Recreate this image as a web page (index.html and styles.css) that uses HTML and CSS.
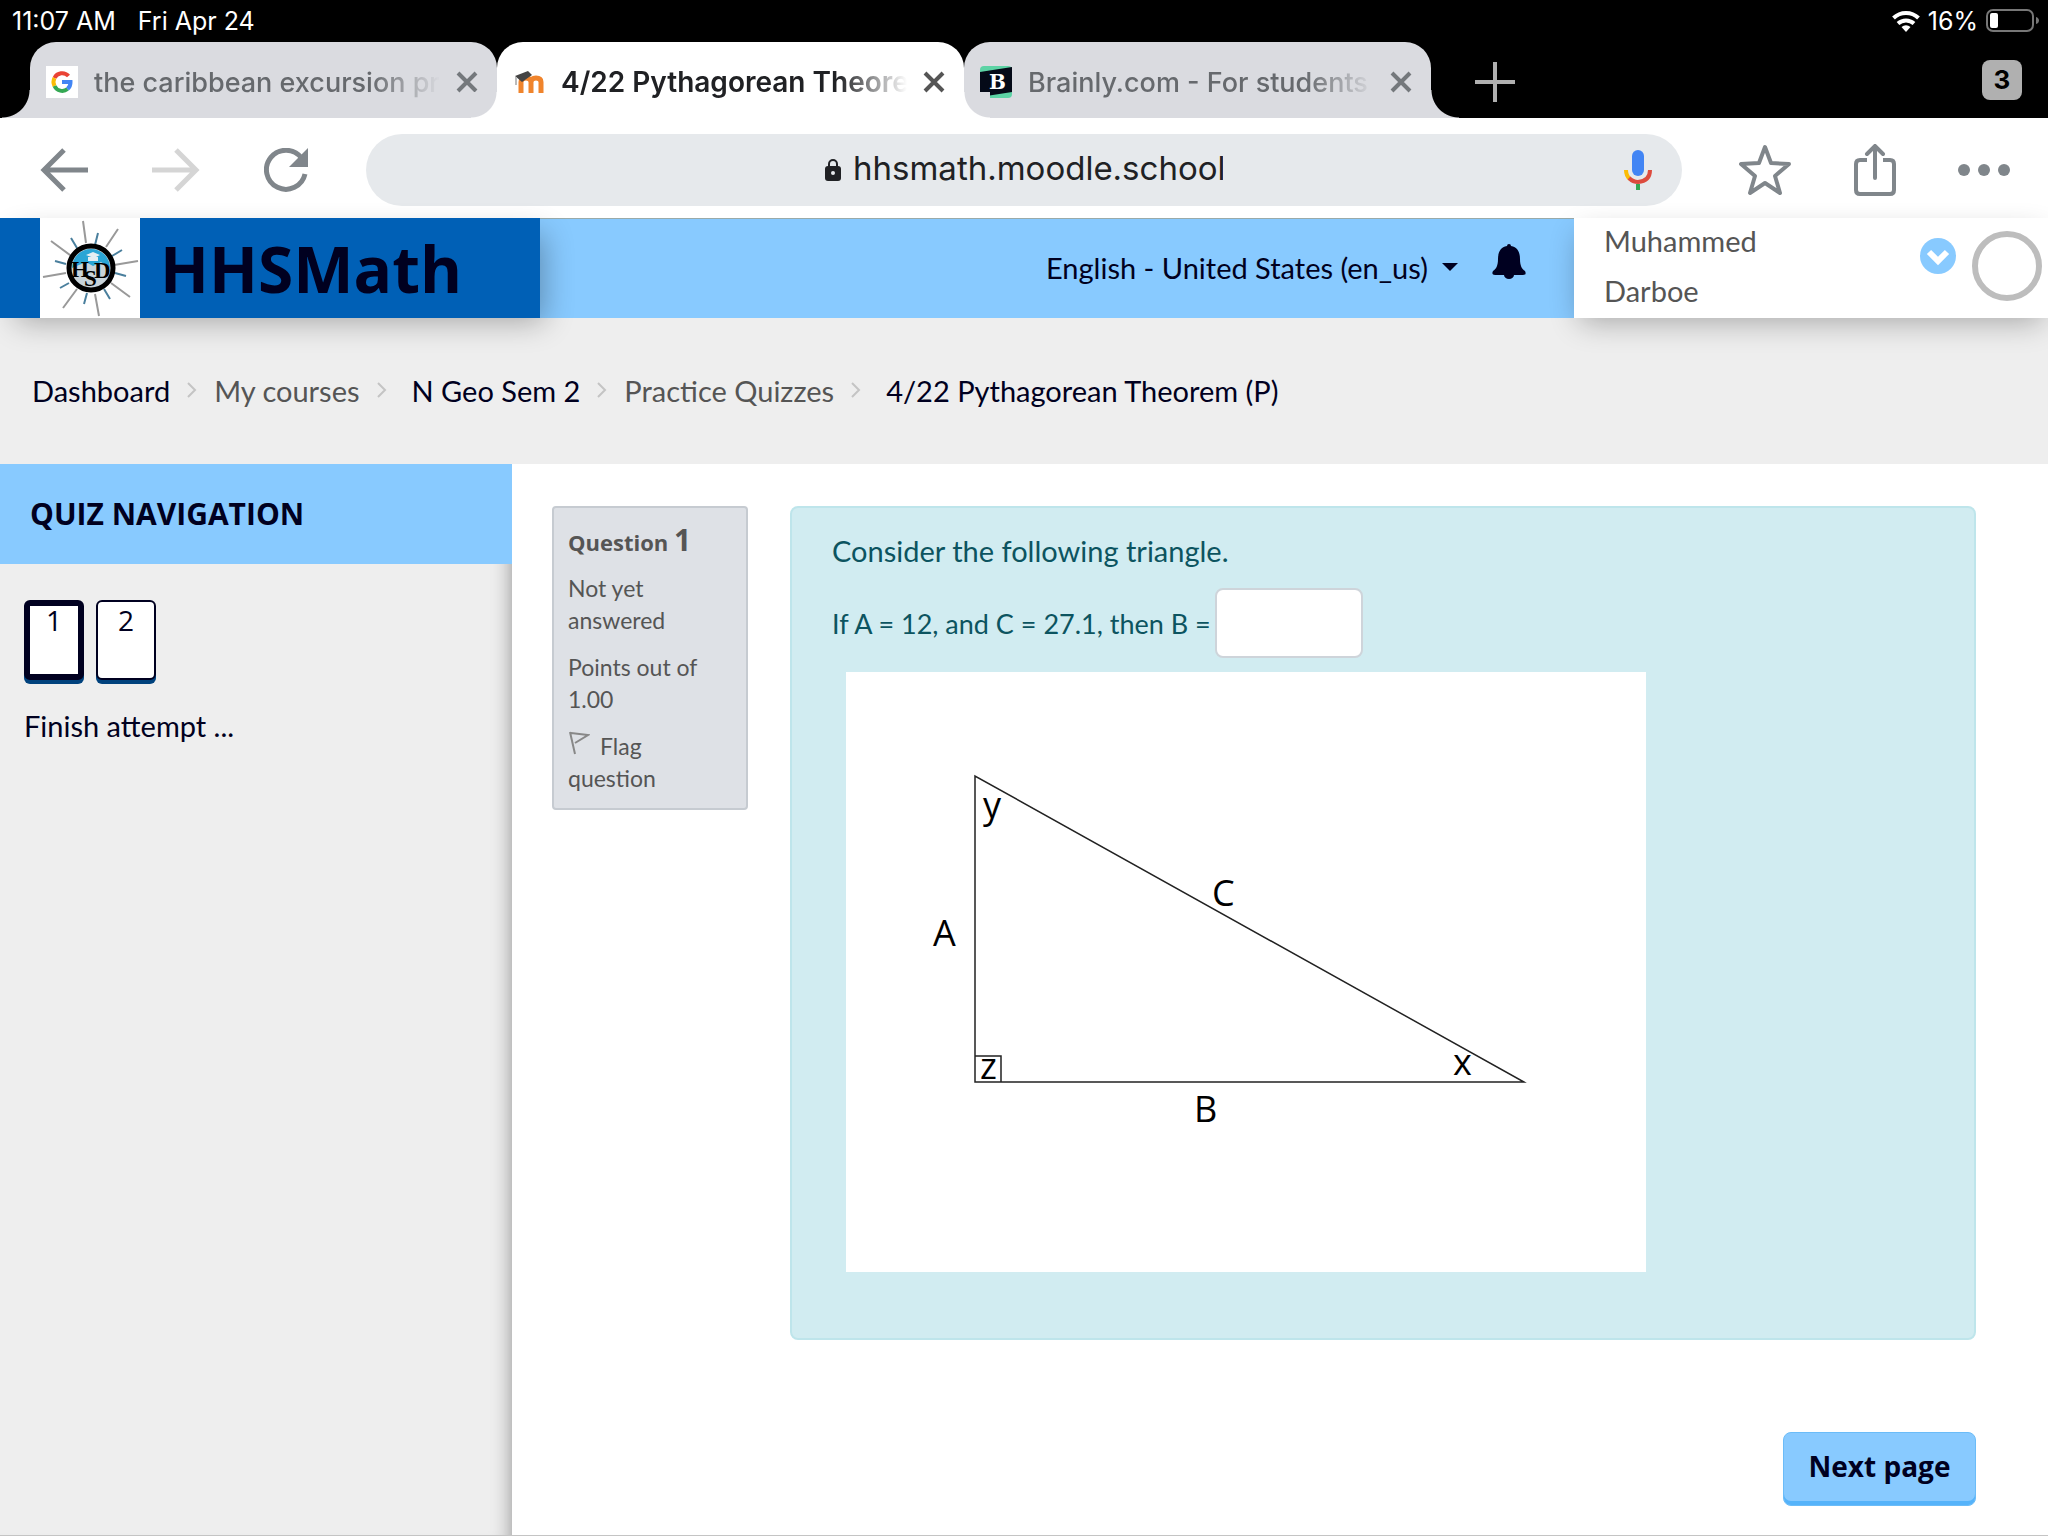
FILE: index.html
```
<!DOCTYPE html>
<html lang="en">
<head>
    <meta charset="UTF-8">
    <meta name="viewport" content="width=device-width, initial-scale=1">
    <title>4/22 Pythagorean Theorem (P)</title>
    <link rel="stylesheet" href="styles.css">
</head>
<body>
    <div class="browser-top">
        <div class="status-bar">
            <span>11:07 AM</span>
            <span>Fri Apr 24</span>
            <div class="status-right">
                <svg width="28" height="22" viewBox="0 0 28 22" fill="none" stroke="#fff" stroke-width="4">
                    <path d="M1.500 8a18 18 0 0 1 25 0"/>
                    <path d="M6 13.500a12 12 0 0 1 16 0"/>
                    <path d="M14 22l-4.500-5a7 7 0 0 1 9 0z" fill="#fff" stroke="none"/>
                </svg>
                <span>16%</span>
                <svg width="54" height="24" viewBox="0 0 54 24">
                    <rect x="1" y="1" width="46" height="21" rx="6" fill="none" stroke="#777" stroke-width="2"/>
                    <rect x="4" y="4" width="8" height="15" rx="2" fill="#fff"/>
                    <path d="M50 8c4 1 4 6 0 7z" fill="#777"/>
                </svg>
            </div>
        </div>
        <div class="tabs">
            <div class="tab first">
                <svg width="32" height="32" viewBox="0 0 32 32">
                    <path fill="#fff" d="M0 0h32v32H0z"/>
                    <g fill="none" stroke-width="4">
                        <path d="M22.500 10A8.500 8.500 0 0 0 8.500 12" stroke="#ea4335"/>
                        <path d="M8.500 12a8.500 8.500 0 0 0 0 8" stroke="#fbbc05"/>
                        <path d="M8.500 20a8.500 8.500 0 0 0 13 3" stroke="#34a853"/>
                        <path d="M16 16h8.500a9 9 0 0 1-3 7" stroke="#4285f4"/>
                    </g>
                </svg>
                <a href="#" class="tab-title">the caribbean excursion pr</a>
                <button class="close" aria-label="Close tab"><svg width="22" height="22" viewBox="0 0 22 22"><path d="M2 2l18 18M20 2L2 20" stroke="currentColor" stroke-width="4"/></svg></button>
            </div>
            <div class="tab active">
                <svg width="32" height="32" viewBox="0 0 32 32">
                    <path d="M8 27V16q0-4 5-4t5 4v11M18 27V16q0-4 5-4t5 4v11" fill="none" stroke="#f0842c" stroke-width="5"/>
                    <path d="M2 10l13-5 4 4-10 7z" fill="#444"/>
                    <path d="M3 11v8" stroke="#bbb" stroke-width="2"/>
                </svg>
                <a href="#" class="tab-title">4/22 Pythagorean Theorem</a>
                <button class="close" aria-label="Close tab"><svg width="22" height="22" viewBox="0 0 22 22"><path d="M2 2l18 18M20 2L2 20" stroke="currentColor" stroke-width="4"/></svg></button>
            </div>
            <div class="tab last">
                <svg width="32" height="32" viewBox="0 0 32 32">
                    <rect width="32" height="32" rx="4" fill="#5dd3a5"/>
                    <path d="M0 6L32 1v25L0 31z" fill="#050a18"/>
                    <text x="9" y="23" class="favicon-letter">B</text>
                </svg>
                <a href="#" class="tab-title">Brainly.com - For students</a>
                <button class="close" aria-label="Close tab"><svg width="22" height="22" viewBox="0 0 22 22"><path d="M2 2l18 18M20 2L2 20" stroke="currentColor" stroke-width="4"/></svg></button>
            </div>
            <button class="new-tab" aria-label="New tab"><svg width="40" height="40" viewBox="0 0 40 40"><path d="M20 0v40M0 20h40" stroke="#b0b0b0" stroke-width="4"/></svg></button>
            <button class="tab-count">3</button>
        </div>
    </div>

    <div class="toolbar">
        <div class="nav-buttons">
            <button aria-label="Back"><svg width="48" height="44" viewBox="0 0 48 44"><path d="M48 22H4M24 2L4 22l20 20" fill="none" stroke="#80868b" stroke-width="5"/></svg></button>
            <button aria-label="Forward"><svg width="48" height="44" viewBox="0 0 48 44"><path d="M0 22h44M24 2l20 20-20 20" fill="none" stroke="#d5d5d5" stroke-width="5"/></svg></button>
            <button aria-label="Reload"><svg width="44" height="44" viewBox="0 0 44 44"><path d="M37.500 10A19.500 19.500 0 1 0 41 26" fill="none" stroke="#80868b" stroke-width="5"/><path d="M44 0v19H25z" fill="#80868b"/></svg></button>
        </div>
        <div class="address">
            <svg width="16" height="22" viewBox="0 0 16 22"><path d="M4 9V5a4 4 0 0 1 8 0v4" fill="none" stroke="#202124" stroke-width="2"/><rect y="7" width="16" height="15" rx="3" fill="#202124"/><circle cx="8" cy="14" r="2" fill="#e8eaed"/></svg>
            <input type="text" value="hhsmath.moodle.school" aria-label="Address">
            <button class="mic" aria-label="Voice search"><svg width="28" height="40" viewBox="0 0 28 40" fill="none" stroke-width="4"><rect x="8" width="12" height="26" rx="6" fill="#4285f4"/><path d="M2 20q0 6 4 9" stroke="#fbbc05"/><path d="M5 28q4 4 9 4 12-1 12-12" stroke="#dd4b3e"/><path d="M14 34v6" stroke="#34a853"/></svg></button>
        </div>
        <div class="tools">
            <button aria-label="Bookmark"><svg width="54" height="52" viewBox="0 0 54 52"><path d="M27 3l6 16 18 1-14 12 5 17-15-10-15 10 5-17L3 20l18-1z" fill="none" stroke="#80868b" stroke-width="4" stroke-linejoin="round"/></svg></button>
            <button aria-label="Share"><svg width="42" height="52" viewBox="0 0 42 52" fill="none" stroke="#80868b"><path d="M13 16H6q-4 0-4 4v26q0 4 4 4h30q4 0 4-4V20q0-4-4-4h-7" stroke-width="4"/><path d="M21 34V2M13 10l8-8 8 8" stroke-width="4" stroke-linecap="round"/></svg></button>
            <button aria-label="More"><svg width="52" height="12" viewBox="0 0 52 12" fill="#80868b"><circle cx="6" cy="6" r="6"/><circle cx="26" cy="6" r="6"/><circle cx="46" cy="6" r="6"/></svg></button>
        </div>
    </div>

    <header class="site-header">
        <a href="#" class="brand">
            <svg class="logo" width="100" height="100" viewBox="0 0 100 100">
                <path fill="#fff" d="M0 0h100v100H0z"/>
                <path d="M43 3l3 22M78 11L66 29M11 23l23 17M98 43l-24 4M3 59l23-4M90 79L71 65M23 90l14-19M59 98l-4-22" stroke="#999" stroke-width="2"/>
                <path d="M58 15l-3 12M31 20l6 10M82 32l-10 6M15 43l11 3M20 70l9-5M44 86l3-11M70 81l-6-10M86 58l-11-3" stroke="#4a7f9d" stroke-width="2"/>
                <circle cx="51" cy="50" r="22" fill="#c9d4da" stroke="#000" stroke-width="5"/>
                <path d="M32 50a19 19 0 0 1 38 0l-9-6-8 4-7-4z" fill="#2aa5d5"/>
                <path d="M46 37l7-3 7 3-6 3zM48 39h10v4H48z" fill="#e5eef2"/>
                <text x="31" y="59" class="logo-letter">H</text>
                <text x="44" y="68" class="logo-letter">S</text>
                <text x="54" y="60" class="logo-letter">D</text>
            </svg>
            <span>HHSMath</span>
        </a>
        <div class="header-tools">
            <div class="language">
                <select aria-label="Language">
                    <option>English - United States ‎(en_us)‎</option>
                </select>
                <svg width="16" height="8" viewBox="0 0 16 8"><path d="M0 0h16L8 8z" fill="#000020"/></svg>
            </div>
            <button class="bell" aria-label="Notifications"><svg width="34" height="36" viewBox="0 0 34 36" fill="#000020"><path d="M15 3a2 2 0 0 1 4 0c7 1 9 7 9 13 0 7 2 10 5 12q2 4-2 4H3q-4 0-2-4c3-2 5-5 5-12 0-6 2-12 9-13z"/><path d="M12 32h10a5 4 0 0 1-10 0z"/></svg></button>
        </div>
        <div class="user">
            <span class="user-name">Muhammed Darboe</span>
            <button aria-label="User menu"><svg width="36" height="36" viewBox="0 0 36 36"><circle cx="18" cy="18" r="18" fill="#88caff"/><path d="M9 14l9 9 9-9" fill="none" stroke="#fff" stroke-width="6"/></svg></button>
            <span class="avatar"></span>
        </div>
    </header>

    <nav class="breadcrumb">
        <a href="#">Dashboard</a>
        <svg class="sep" width="10" height="16" viewBox="0 0 10 16"><path d="M1 1l7 7-7 7"/></svg>
        <span>My courses</span>
        <svg class="sep" width="10" height="16" viewBox="0 0 10 16"><path d="M1 1l7 7-7 7"/></svg>
        <a href="#" class="course">N Geo Sem 2</a>
        <svg class="sep" width="10" height="16" viewBox="0 0 10 16"><path d="M1 1l7 7-7 7"/></svg>
        <span>Practice Quizzes</span>
        <svg class="sep" width="10" height="16" viewBox="0 0 10 16"><path d="M1 1l7 7-7 7"/></svg>
        <a href="#" class="course">4/22 Pythagorean Theorem (P)</a>
    </nav>

    <div class="page">
        <aside class="sidebar">
            <h2>QUIZ NAVIGATION</h2>
            <div class="quiz-nav">
                <div class="quiz-buttons">
                    <a href="#" class="current">1</a>
                    <a href="#">2</a>
                </div>
                <a href="#" class="finish">Finish attempt ...</a>
            </div>
        </aside>
        <main>
            <div class="question">
                <div class="info">
                    <h3>Question <span>1</span></h3>
                    <p>Not yet answered</p>
                    <p>Points out of 1.00</p>
                    <p><svg class="flag" width="22" height="24" viewBox="0 0 22 24"><path d="M2 1l5 22M3 2l17 2-13 8" fill="none" stroke="#888" stroke-width="2"/></svg>Flag question</p>
                </div>
                <div class="content">
                    <p>Consider the following triangle.</p>
                    <div class="answer">
                        <label for="answer">If A = 12, and C = 27.1, then B =</label>
                        <input type="text" id="answer">
                    </div>
                    <svg class="triangle" width="800" height="600" viewBox="0 0 800 600">
                        <path d="M129 104v306h549zM129 384h26v26" fill="none" stroke="#222" stroke-width="1.500"/>
                        <text x="87" y="274">A</text>
                        <text x="348" y="450">B</text>
                        <text x="366" y="234">C</text>
                        <text x="137" y="146">y</text>
                        <text x="134" y="407">z</text>
                        <text x="607" y="403">x</text>
                    </svg>
                </div>
            </div>
            <button class="next">Next page</button>
        </main>
    </div>
</body>
</html>
```
FILE: styles.css
```
* {
    box-sizing: border-box;
}
body {
    margin: 0;
    min-height: 100vh;
    display: flex;
    flex-direction: column;
    background: #fff;
    border-bottom: 1px solid #c4c4c4;
    font-family: Lato, sans-serif;
    font-size: 29px;
    color: #555;
}
a {
    color: #000020;
    text-decoration: none;
}
button {
    padding: 0;
    border: 0;
    background: none;
    display: flex;
    align-items: center;
    justify-content: center;
}
svg {
    flex-shrink: 0;
}

/* browser */
.browser-top {
    background: #000;
    font-family: Inter, sans-serif;
}
.status-bar {
    display: flex;
    align-items: center;
    gap: 22px;
    height: 42px;
    padding: 0 8px 0 12px;
    font-size: 25px;
    color: #fff;
}
.status-right {
    margin-left: auto;
    display: flex;
    align-items: center;
    gap: 8px;
}
.tabs {
    display: flex;
    align-items: center;
    height: 76px;
    padding: 0 26px 0 30px;
}
.tab {
    position: relative;
    width: 467px;
    height: 76px;
    display: flex;
    align-items: center;
    gap: 16px;
    padding: 4px 19px 0 16px;
    border-radius: 26px;
    background: #dadbe0;
}
.tab.active {
    border-radius: 26px 26px 0 0;
    background: #fff;
}
.first {
    border-bottom-left-radius: 0;
}
.last {
    border-bottom-right-radius: 0;
}
.first::before,
.last::after {
    content: "";
    position: absolute;
    bottom: 0;
    width: 28px;
    height: 28px;
}
.first::before {
    right: 100%;
    background: radial-gradient(circle at 0 0, #000 27px, #dadbe0 28px);
}
.last::after {
    left: 100%;
    background: radial-gradient(circle at 100% 0, #000 27px, #dadbe0 28px);
}
/* white behind the rounded corners beside the active tab */
.active::before,
.active::after {
    content: "";
    position: absolute;
    bottom: 0;
    width: 26px;
    height: 26px;
}
.active::before {
    right: 100%;
    background: radial-gradient(circle at 0 0, #dadbe0 25px, #fff 26px);
}
.active::after {
    left: 100%;
    z-index: 1;
    background: radial-gradient(circle at 100% 0, #dadbe0 25px, #fff 26px);
}
.tab-title {
    flex: 1;
    overflow: hidden;
    white-space: nowrap;
    font-size: 27px;
    font-weight: 500;
    color: #66696d;
    -webkit-mask-image: linear-gradient(to right, #000 80%, transparent);
    mask-image: linear-gradient(to right, #000 80%, transparent);
}
.active .tab-title {
    font-size: 28px;
    font-weight: 600;
    color: #202124;
}
.close {
    color: #74787c;
}
.active .close {
    color: #555;
}
.favicon-letter {
    font: bold 20px "DejaVu Serif", serif;
    fill: #fff;
}
.new-tab {
    margin: 4px 0 0 44px;
}
.tab-count {
    margin-left: auto;
    width: 40px;
    height: 40px;
    padding-bottom: 2px;
    border-radius: 8px;
    background: #b0b0b0;
    font: bold 26px Inter, sans-serif;
    color: #000;
}
.toolbar {
    display: flex;
    align-items: center;
    gap: 56px;
    height: 100px;
    padding: 4px 38px 0 40px;
}
.nav-buttons {
    display: flex;
    gap: 64px;
    padding-right: 2px;
}
.address {
    position: relative;
    flex: 1;
    height: 72px;
    display: flex;
    align-items: center;
    justify-content: center;
    gap: 12px;
    border-radius: 36px;
    background: #e6e9ec;
}
.address input {
    width: 370px;
    padding: 0 0 4px;
    border: 0;
    background: none;
    font: 33px Inter, sans-serif;
    color: #202124;
}
.mic {
    position: absolute;
    right: 30px;
}
.tools {
    display: flex;
    align-items: center;
    gap: 62px;
}

/* site header */
.site-header {
    position: relative;
    display: flex;
    height: 100px;
    background: #88caff;
    box-shadow: inset 0 1px #9aa;
}
.brand {
    display: flex;
    align-items: center;
    gap: 20px;
    width: 540px;
    padding-left: 40px;
    background: #0060b6;
    box-shadow: 10px 10px 30px -6px rgba(0, 0, 0, 0.3);
    font-family: "Open Sans", sans-serif;
    font-size: 64px;
    font-weight: bold;
}
.logo-letter {
    font: bold 23px "Liberation Serif", serif;
}
.header-tools {
    flex: 1;
    display: flex;
    align-items: center;
    justify-content: flex-end;
    gap: 34px;
    padding: 0 48px 2px 0;
}
.language {
    display: flex;
    align-items: center;
    gap: 14px;
}
.language select {
    appearance: none;
    padding: 0;
    border: 0;
    background: none;
    font: 29px Lato, sans-serif;
    color: #000020;
}
.bell {
    padding-bottom: 12px;
}
.user {
    display: flex;
    align-items: center;
    gap: 16px;
    width: 474px;
    padding: 0 6px 4px 30px;
    background: #fff;
    box-shadow: 0 10px 30px -6px rgba(0, 0, 0, 0.3);
}
.user-name {
    width: 180px;
    margin-right: auto;
    line-height: 50px;
}
.user button {
    padding-bottom: 20px;
}
.avatar {
    width: 70px;
    height: 70px;
    border: 6px solid #bdbdbd;
    border-radius: 50%;
}

/* breadcrumb */
.breadcrumb {
    display: flex;
    align-items: center;
    gap: 17px;
    height: 146px;
    padding: 0 32px 2px;
    background: #eee;
}
.course {
    margin-left: 8px;
}
.sep {
    fill: none;
    stroke: #c4c4c4;
    stroke-width: 2;
}

/* page */
.page {
    flex: 1;
    display: flex;
}
.sidebar {
    width: 25%;
    background: #eee;
    box-shadow: inset -20px 0 20px -20px rgba(0, 0, 0, 0.4);
}
.sidebar h2 {
    margin: 0;
    padding-left: 30px;
    line-height: 100px;
    background: #88caff;
    font-family: "Open Sans", sans-serif;
    font-size: 30px;
    color: #000020;
}
.quiz-nav {
    padding: 36px 24px;
}
.quiz-buttons {
    display: flex;
    gap: 12px;
    margin-bottom: 26px;
}
.quiz-buttons a {
    width: 60px;
    height: 80px;
    border: 2px solid #000020;
    border-radius: 6px;
    background: #fff;
    box-shadow: 0 4px #00427d;
    font: 28px/36px "Open Sans", sans-serif;
    text-align: center;
}
.quiz-buttons .current {
    border-width: 6px;
    line-height: 28px;
}
.finish {
    line-height: 40px;
}
main {
    flex: 1;
    padding: 42px 72px 28px 40px;
}
.question {
    display: flex;
    align-items: flex-start;
    gap: 42px;
}
.info {
    width: 196px;
    padding: 16px 14px 14px;
    border: 2px solid #c6cbd1;
    border-radius: 4px;
    background: #dee1e6;
    font-size: 23px;
    line-height: 32px;
}
.info h3 {
    margin: 0 0 14px;
    font-family: "Open Sans", sans-serif;
    font-size: 22px;
    line-height: 32px;
}
.info h3 span {
    font-size: 30px;
}
.info p {
    margin: 0 0 15px;
}
.info p:last-child {
    margin: 0;
}
.flag {
    margin-right: 10px;
}
.content {
    flex: 1;
    padding: 22px 40px 66px;
    border: 2px solid #bee5eb;
    border-radius: 8px;
    background: #d1ecf1;
    color: #0c5460;
}
.content p {
    margin: 0 0 16px;
    line-height: 42px;
}
.answer {
    display: flex;
    align-items: center;
    gap: 4px;
    margin-bottom: 14px;
    font-size: 27px;
}
.answer input {
    width: 148px;
    height: 70px;
    border: 2px solid #ced4da;
    border-radius: 8px;
    background: #fff;
}
.triangle {
    display: block;
    margin-left: 14px;
    background: #fff;
}
.triangle text {
    font: 500 36px "Open Sans", sans-serif;
}
.next {
    width: 193px;
    height: 74px;
    margin: 92px 0 0 auto;
    padding-bottom: 6px;
    border: 1px solid #6bbcf8;
    border-radius: 8px;
    background: #88caff;
    box-shadow: inset 0 -4px #55b3fa;
    font: bold 28px "Open Sans", sans-serif;
    color: #000020;
}
```
